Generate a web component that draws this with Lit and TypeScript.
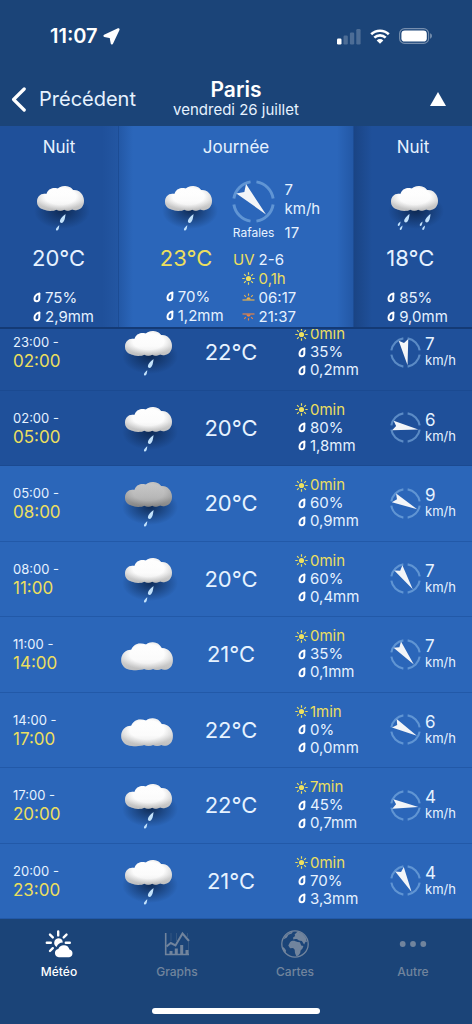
import { LitElement, html, svg, css, nothing } from "lit";
import { customElement, property, state } from "lit/decorators.js";
import { classMap } from "lit/directives/class-map.js";

type Sky = "rain" | "grey-rain" | "heavy-rain" | "cloud";

interface Slot {
  from: string;
  to: string;
  sky: Sky;
  temp: string;
  sun: string;
  chance: string;
  rain: string;
  wind: number;
  angle: number;
  night?: boolean;
}

const SLOTS: Slot[] = [
  { from: "23:00", to: "02:00", sky: "rain", temp: "22°C", sun: "0min", chance: "35%", rain: "0,2mm", wind: 7, angle: 171, night: true },
  { from: "02:00", to: "05:00", sky: "rain", temp: "20°C", sun: "0min", chance: "80%", rain: "1,8mm", wind: 6, angle: 99, night: true },
  { from: "05:00", to: "08:00", sky: "grey-rain", temp: "20°C", sun: "0min", chance: "60%", rain: "0,9mm", wind: 9, angle: 116 },
  { from: "08:00", to: "11:00", sky: "rain", temp: "20°C", sun: "0min", chance: "60%", rain: "0,4mm", wind: 7, angle: 146 },
  { from: "11:00", to: "14:00", sky: "cloud", temp: "21°C", sun: "0min", chance: "35%", rain: "0,1mm", wind: 7, angle: 140 },
  { from: "14:00", to: "17:00", sky: "cloud", temp: "22°C", sun: "1min", chance: "0%", rain: "0,0mm", wind: 6, angle: 119 },
  { from: "17:00", to: "20:00", sky: "rain", temp: "22°C", sun: "7min", chance: "45%", rain: "0,7mm", wind: 4, angle: 97 },
  { from: "20:00", to: "23:00", sky: "rain", temp: "21°C", sun: "0min", chance: "70%", rain: "3,3mm", wind: 4, angle: 152 },
];

const DROP = html`<svg class="drop" width="8" height="11" viewBox="0 0 8 11" aria-hidden="true">
  <path d="M6.5 1.4C3.6 2.4 1.5 4.2 1.5 6.7c0 1.6 1 2.5 2.3 2.5s2.4-1 2.5-2.5c.1-1.8-.2-3.6.2-5.3z"
    fill="none" stroke="#fff" stroke-width="2" stroke-linejoin="round" />
</svg>`;

const SUN = html`<svg class="sun" width="13" height="13" viewBox="0 0 13 13" aria-hidden="true">
  <circle cx="6.5" cy="6.5" r="2.6" fill="currentColor" />
  <path d="M6.5.3v2.4M6.5 10.3v2.4M.3 6.5h2.4M10.3 6.5h2.4M2.1 2.1l1.7 1.7M9.2 9.2l1.7 1.7M10.9 2.1L9.2 3.8M3.8 9.2l-1.7 1.7"
    stroke="currentColor" stroke-width="1.2" />
</svg>`;

const HORIZON_RAYS = svg`<path d="M6.5.4v2.4M2.2 2.2l1.7 1.7M10.8 2.2L9.1 3.9" stroke="currentColor" stroke-width="1.1" />
  <path d="M4.4 6.4a2.1 2.1 0 0 1 4.2 0z" fill="currentColor" />`;

const SUNRISE = html`<svg class="rise" width="13" height="9" viewBox="0 0 13 9" aria-hidden="true">
  ${HORIZON_RAYS}<path d="M.5 7h12" stroke="currentColor" stroke-width="1.2" />
</svg>`;

const SUNSET = html`<svg class="set" width="13" height="9" viewBox="0 0 13 9" aria-hidden="true">
  <g transform="translate(0 9) scale(1 -1)">${HORIZON_RAYS}</g><path d="M.5 2h12" stroke="currentColor" stroke-width="1.2" />
</svg>`;

@customElement("sky-icon")
class SkyIcon extends LitElement {
  @property() sky: Sky = "rain";

  static styles = css`
    :host { display: block; width: 62px; height: 50px; }
    svg { display: block; overflow: visible; }
  `;

  private drop(x: number, y: number, size: number) {
    return svg`<path transform="translate(${x} ${y}) scale(${size})"
      d="M0 0C-2 1.6-5.6 4.5-5.6 7.2c0 1.2.9 1.9 2 1.7C-1.2 8.4-.3 3.8 0 0z" fill="#c3e2fb" />`;
  }

  private rain() {
    if (this.sky === "cloud") return nothing;
    if (this.sky === "heavy-rain") {
      return svg`${this.drop(26.5, 32, 0.95)}${this.drop(19.5, 43.5, 0.5)}${this.drop(17.5, 39.5, 0.5)}
        ${this.drop(47.5, 32, 0.95)}${this.drop(42, 43.5, 0.5)}${this.drop(39.5, 39.5, 0.5)}`;
    }
    return svg`${this.drop(36.5, 32, 1)}${this.drop(30.3, 43.2, 0.6)}`;
  }

  render() {
    const lone = this.sky === "cloud";
    const grey = this.sky === "grey-rain";
    const shape = lone
      ? "M11 40.2C7 39 4.200 35.600 4.200 31c0-5.600 4.200-10.300 10-10.200 1.500-4 4.900-6.500 9.300-6.400 2 0 3.800.4 5.500 1.100 1.900-1.500 4.200-2.300 6.700-2.300 4 .1 7.300 2.300 9 5.700 6.500-.1 11.200 5.300 11.200 11.800 0 5.300-2.500 9.700-7.700 10-1.500.1-2.800-.2-3.900-.7-2.600 1.300-5.600 1.300-8.200.1-2.900 1.300-6.200 1.300-9 0-4 1.500-11.600 1.500-16.100.1z"
      : "M14.5 27.5C10.8 27 8 23.8 8 19.6c0-5.2 4.6-8.9 9.4-7.5 1.3-4.2 4.800-6.500 9-6.100 1 .1 1.700.2 2.400.5 2-1.700 4.700-2.700 7.600-2.500 3.700.2 6.200 1.800 7.700 4 6.100-.5 10.900 4.600 10.900 10.800 0 5.600-3.500 9-7.800 9.400-1.500.1-2.800-.1-3.900-.7-2.600 1.500-5.600 1.500-8 .2-2.600 1.500-5.600 1.500-7.900 0-3.600 1.600-8.900 1.600-12.900-.2z";
    return html`<svg width="62" height="50" viewBox="0 0 62 50" role="img" aria-label=${lone ? "Nuageux" : "Pluie"}>
      <defs>
        <linearGradient id="body" x1="0" y1="0" x2="0" y2="1">
          <stop offset="0" stop-color=${grey ? "#c8c8c8" : "#ffffff"} />
          <stop offset="0.6" stop-color=${grey ? "#b0b0b0" : "#fafafa"} />
          <stop offset="1" stop-color=${grey ? "#8c8c8c" : "#dddddd"} />
        </linearGradient>
        <radialGradient id="shade">
          <stop offset="0" stop-color="#0b2348" stop-opacity="0.85" />
          <stop offset="0.5" stop-color="#0b2348" stop-opacity="0.42" />
          <stop offset="1" stop-color="#0b2348" stop-opacity="0" />
        </radialGradient>
        <radialGradient id="glow" cx="0.5" cy="0.42" r="0.55">
          <stop offset="0.6" stop-color=${grey ? "#cccccc" : "#ffffff"} stop-opacity="0.3" />
          <stop offset="1" stop-color="#777777" stop-opacity="0.3" />
        </radialGradient>
      </defs>
      ${lone ? nothing : svg`<ellipse cx="33" cy="29" rx="28" ry="18" fill="url(#shade)" />`}
      <path d=${shape} fill="url(#body)" />
      <path d=${shape} fill="url(#glow)" />
      ${this.rain()}
    </svg>`;
  }
}

@customElement("wind-dial")
class WindDial extends LitElement {
  @property({ type: Number }) angle = 0;

  static styles = css`
    :host { display: block; width: 31px; height: 31px; }
    svg { display: block; width: 100%; height: 100%; }
  `;

  render() {
    return html`<svg viewBox="-16 -16 32 32" aria-hidden="true">
      <g fill="none" stroke="#8dbbea" stroke-opacity="0.55" stroke-width="2.2">
        ${[0, 90, 180, 270].map((turn) => svg`<path transform="rotate(${turn})" d="M2.2-14.6A14.8 14.8 0 0 1 14.6-2.2" />`)}
      </g>
      <path transform="rotate(${this.angle})" d="M0-13.4L5 13.2 0 9.8-5 13.2z" fill="#f3f5f8" />
    </svg>`;
  }
}

@customElement("app-root")
class AppRoot extends LitElement {
  @state() private tab = "Météo";

  static styles = css`
    :host {
      display: flex;
      flex-direction: column;
      min-height: 100vh;
      background: #1b4478;
      color: #e6f2ff;
      font-family: Inter, "Liberation Sans", sans-serif;
      font-size: 15px;
      line-height: 19px;
    }
    * { box-sizing: border-box; }
    button {
      border: 0;
      padding: 0;
      background: none;
      color: inherit;
      font: inherit;
      cursor: pointer;
    }
    h1, h2, p, ul { margin: 0; padding: 0; font-weight: 400; }
    ul { list-style: none; }
    svg { display: block; }

    .status {
      display: flex;
      align-items: center;
      justify-content: space-between;
      height: 72px;
      padding: 0 39px 0 50px;
      color: #fff;
    }
    .clock { display: flex; align-items: center; gap: 5px; font-size: 20px; font-weight: 600; }
    .signals { display: flex; align-items: center; gap: 9px; }

    .nav {
      display: grid;
      grid-template-columns: 1fr auto 1fr;
      align-items: center;
      height: 54px;
      padding: 0 26px 0 11px;
    }
    .back { display: flex; align-items: center; gap: 12px; font-size: 20px; line-height: 24px; }
    .place { text-align: center; padding-left: 15px; }
    .city { font-size: 21px; line-height: 22px; font-weight: 600; color: #fff; }
    .date { font-size: 15px; line-height: 18px; }
    .up { justify-self: end; }

    .summary {
      display: grid;
      grid-template-columns: 1fr 2fr 1fr;
      border-bottom: 2px solid #143a75;
    }
    .panel { background: #1f509a; padding: 10px 0 1px; }
    .panel.before { background: linear-gradient(90deg, #1f509a calc(100% - 16px), #2356a2); }
    .panel.after { background: linear-gradient(90deg, #1a4484, #1f509a 18px); }
    .panel.day {
      background: linear-gradient(90deg, #2358a6, #2b66ba 14px, #2b66ba calc(100% - 16px), #2358a6);
      border: solid #1c4c94;
      border-width: 0 1px;
    }
    .panel h2 { font-size: 17px; line-height: 22px; text-align: center; }
    .body {
      display: flex;
      justify-content: center;
      gap: 7px;
      padding: 24px 0 0 5px;
    }
    .degrees { font-size: 22px; line-height: 28px; padding: 12px 0 16px 3px; }
    .day .degrees { color: #ecdf5f; padding-bottom: 15px; }
    .facts { padding-left: 4px; }
    .day .facts { padding-left: 9px; }
    .fact { display: flex; align-items: center; gap: 4px; }

    .aux { display: flex; flex-direction: column; gap: 8px; margin-top: -2px; }
    .gust { font-size: 12px; justify-self: center; }
    .wind { display: grid; grid-template-columns: 46px auto; column-gap: 8px; }
    .wind wind-dial { width: 43px; height: 43px; justify-self: center; }
    .sunline { display: grid; grid-template-columns: 20px auto; column-gap: 4px; padding-left: 4px; }
    .sunline > :nth-child(odd) { justify-self: end; align-self: center; }
    .yellow, .sun { color: #ecdf5f; }
    .rise { color: #e8b24c; }
    .set { color: #e88445; }

    .hours { flex: 1; display: flex; overflow: hidden; background: #1f509a; }
    .slots { flex: 1; display: grid; grid-auto-rows: minmax(70px, 1fr); margin-top: -14px; }
    .slot {
      display: grid;
      grid-template-columns: 107fr 82fr 84fr 106fr 93fr;
      align-items: center;
      background: #2b66b9;
      border-bottom: 1px solid #2259a8;
    }
    .slot.night { background: #1f509a; border-bottom-color: #1b4a91; }
    .time { padding-left: 13px; font-size: 13px; }
    .time b { display: block; font-weight: 400; font-size: 17px; color: #ecdf5f; }
    .slot sky-icon { justify-self: center; }
    .temp { font-size: 22px; line-height: 28px; text-align: center; }
    .details { padding-left: 22px; line-height: 18px; }
    .details .fact { gap: 2px; }
    .details .drop { margin: 0 2px 0 3px; }
    .breeze { display: flex; align-items: center; gap: 4px; padding-left: 11px; font-size: 13px; line-height: 16px; }
    .breeze b { display: block; font-weight: 400; font-size: 17px; }

    .tabs { display: grid; grid-template-columns: repeat(4, 1fr); padding-top: 9px; }
    .tab {
      display: flex;
      flex-direction: column;
      align-items: center;
      gap: 3px;
      color: #71849d;
      font-size: 12px;
      line-height: 18px;
      font-weight: 500;
    }
    .tab svg { width: 32px; height: 32px; }
    .tab.active { color: #fff; }
    .home { width: 168px; height: 6px; border-radius: 3px; background: #fff; margin: 27px auto 10px; }
  `;

  private renderFact(icon: unknown, text: string, yellow = false) {
    return html`<p class=${classMap({ fact: true, yellow })}>${icon}${text}</p>`;
  }

  private renderOutlook(sky: Sky, temp: string, chance: string, rain: string) {
    return html`<div>
      <sky-icon sky=${sky}></sky-icon>
      <p class="degrees">${temp}</p>
      <div class="facts">${this.renderFact(DROP, chance)}${this.renderFact(DROP, rain)}</div>
    </div>`;
  }

  private renderSlot(s: Slot) {
    return html`<li class=${classMap({ slot: true, night: !!s.night })}>
      <p class="time">${s.from} -<b>${s.to}</b></p>
      <sky-icon sky=${s.sky}></sky-icon>
      <p class="temp">${s.temp}</p>
      <div class="details">
        ${this.renderFact(SUN, s.sun, true)}${this.renderFact(DROP, s.chance)}${this.renderFact(DROP, s.rain)}
      </div>
      <div class="breeze">
        <wind-dial angle=${s.angle}></wind-dial>
        <p><b>${s.wind}</b>km/h</p>
      </div>
    </li>`;
  }

  private renderTab(name: string, icon: unknown) {
    const active = this.tab === name;
    return html`<button class=${classMap({ tab: true, active })} aria-current=${active ? "page" : nothing}
      @click=${() => (this.tab = name)}>
      <svg viewBox="0 0 32 32" aria-hidden="true">${icon}</svg>${name}
    </button>`;
  }

  render() {
    return html`
      <div class="status">
        <div class="clock">11:07
          <svg width="17" height="17" viewBox="0 0 17 17" aria-hidden="true"><path d="M15.4 1.400L1.600 7.800l6.200 1.400 1.100 6z" fill="#fff" stroke="#fff" stroke-width="2.400" stroke-linejoin="round" /></svg>
        </div>
        <div class="signals">
          <svg width="24" height="17" viewBox="0 0 24 17" aria-hidden="true">
            <rect x="0" y="10.5" width="4.5" height="6" rx="1.2" fill="#fff" />
            <g fill="#fff" opacity="0.22">
              <rect x="6.5" y="7.5" width="4.3" height="9" rx="1.2" /><rect x="12.9" y="4.5" width="4.3" height="12" rx="1.2" /><rect x="19.3" y="1" width="4.3" height="15.5" rx="1.2" />
            </g>
          </svg>
          <svg width="20" height="15" viewBox="0 0 20 15" aria-hidden="true">
            <path d="M1.2 5.3a12.8 12.8 0 0 1 17.6 0M4.3 8.6a8.4 8.4 0 0 1 11.4 0" fill="none" stroke="#fff" stroke-width="2.6" />
            <path d="M10 14.7L6.7 11.4a4.7 4.7 0 0 1 6.6 0z" fill="#fff" />
          </svg>
          <svg width="34" height="16" viewBox="0 0 34 16" aria-hidden="true">
            <rect x="0.6" y="0.6" width="29" height="14.8" rx="5" fill="none" stroke="#fff" stroke-opacity="0.4" stroke-width="1.1" />
            <rect x="2.4" y="2.4" width="25.4" height="11.2" rx="3.4" fill="#fff" />
            <path d="M31.2 5.3c2.2.9 2.2 4.5 0 5.4z" fill="#fff" fill-opacity="0.45" />
          </svg>
        </div>
      </div>

      <header class="nav">
        <button class="back">
          <svg width="16" height="25" viewBox="0 0 16 25" aria-hidden="true"><path d="M13.2 2L2.6 12.5 13.2 23" fill="none" stroke="#fff" stroke-width="3.2" stroke-linecap="round" stroke-linejoin="round" /></svg>
          Précédent
        </button>
        <div class="place"><h1 class="city">Paris</h1><p class="date">vendredi 26 juillet</p></div>
        <button class="up" aria-label="Replier">
          <svg width="16" height="14" viewBox="0 0 16 14" aria-hidden="true"><path d="M8 0l8 14H0z" fill="#fff" /></svg>
        </button>
      </header>

      <section class="summary">
        <div class="panel before"><h2>Nuit</h2><div class="body">${this.renderOutlook("rain", "20°C", "75%", "2,9mm")}</div></div>
        <div class="panel day">
          <h2>Journée</h2>
          <div class="body">
            ${this.renderOutlook("rain", "23°C", "70%", "1,2mm")}
            <div class="aux">
              <div class="wind">
                <wind-dial angle="136"></wind-dial><p>7<br />km/h</p>
                <span class="gust">Rafales</span><span>17</span>
              </div>
              <div class="sunline">
                <span class="yellow">UV</span><span>2-6</span>
                ${SUN}<span class="yellow">0,1h</span>
                ${SUNRISE}<span>06:17</span>
                ${SUNSET}<span>21:37</span>
              </div>
            </div>
          </div>
        </div>
        <div class="panel after"><h2>Nuit</h2><div class="body">${this.renderOutlook("heavy-rain", "18°C", "85%", "9,0mm")}</div></div>
      </section>

      <main class="hours"><ul class="slots">${SLOTS.map((s) => this.renderSlot(s))}</ul></main>

      <nav class="tabs">
        ${this.renderTab("Météo", svg`
          <g stroke="currentColor" stroke-width="2.4" stroke-linecap="round">
            <path d="M15.2 3.4v4M3.8 14.8h4M22.8 14.8h4M7 6.6l2.8 2.8M23.5 6.6l-2.8 2.8M7 23l2.8-2.8" />
          </g>
          <path d="M15.2 10.3a4.6 4.6 0 0 1 4.6 4.2 6.9 6.9 0 0 0-6.2 4.4A4.6 4.6 0 0 1 15.2 10.3z" fill="currentColor" />
          <path d="M15.8 29.2a4.2 4.2 0 0 1-.5-8.3 6 6 0 0 1 11.2.5 4 4 0 0 1-.3 7.8z" fill="currentColor" />`)}
        ${this.renderTab("Graphs", svg`
          <path d="M4.7 5v21.5H28" fill="none" stroke="currentColor" stroke-width="1.6" />
          <path d="M5.5 18.5l4.3-3.5 4.7 2.5L21.5 5.5 28 13" fill="none" stroke="currentColor" stroke-width="2" />
          <path d="M10 23v3M15.3 20.5V26M20.7 17v9M26 22v4" stroke="currentColor" stroke-width="3" />
          <path d="M10 5v8M15.5 5v8M26.5 5v4M27.5 14v12" stroke="currentColor" stroke-width="0.5" opacity="0.6" />`)}
        ${this.renderTab("Cartes", svg`
          <circle cx="16" cy="16" r="13.2" fill="none" stroke="currentColor" stroke-width="1.3" />
          <path d="M11 14.2c1.6-1.7 3.9-1.5 5.4-1l2.3.9 2.2.2 1.3 3.1 2.2.7-.9 2.4-1.9 2-.4 2.6-2 2.6-2 .4-1.2-3.2-.3-3.1-1.6-1.7-3 .1-1.8-2.6z" fill="currentColor" />
          <path d="M14.3 11.6l-.2-2.2 2-1.3-.5-1.7 3-2.8 4.5 1.6 3.6 4 1.3 5-1.4-.5-1.5 2.7-2.2-3.4-3-.6-2-1.5-1.8.2z" fill="currentColor" />
          <path d="M5.6 8.8l4.2-3.9 4.3-1.3-1.3 1.9-3.3 1.3-1.6 2.7-3 1.8zM3.3 18.5l1.8 1.2 1.9 2.5-.4 3.2-2.4-3.4z" fill="currentColor" />`)}
        ${this.renderTab("Autre", svg`<g fill="currentColor"><circle cx="5.7" cy="16" r="2.9" /><circle cx="16" cy="16" r="2.9" /><circle cx="26.3" cy="16" r="2.9" /></g>`)}
      </nav>
      <div class="home"></div>
    `;
  }
}
